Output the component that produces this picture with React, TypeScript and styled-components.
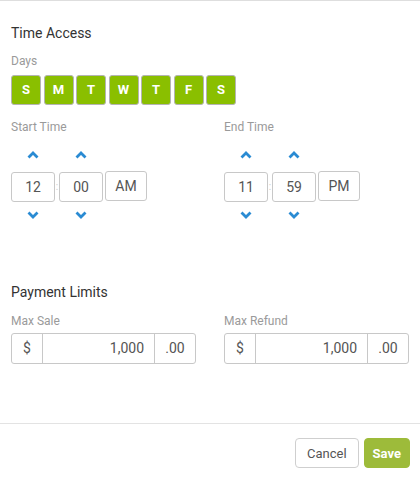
import React from 'react';
import styled, { createGlobalStyle } from 'styled-components';

const GlobalStyle = createGlobalStyle`
  html, body {
    margin: 0;
    padding: 0;
    background: #fff;
    font-family: Roboto, 'Liberation Sans', Arial, sans-serif;
  }
`;

const Panel = styled.div`
  width: 420px;
  height: 482px;
  box-sizing: border-box;
  border-top: 1px solid #dedede;
  display: flex;
  flex-direction: column;
`;

const Body = styled.div`
  flex: 1;
  padding: 0 11px;
`;

const SectionTitle = styled.div<{ $top: number }>`
  margin-top: ${(p) => p.$top}px;
  font-size: 14px;
  line-height: 20px;
  color: #333;
`;

const Label = styled.div<{ $top: number }>`
  margin-top: ${(p) => p.$top}px;
  font-size: 12px;
  line-height: 16px;
  color: #9a9a9a;
`;

const DayRow = styled.div`
  display: flex;
  gap: 2.5px;
  margin-top: 6px;
`;

const DayButton = styled.button`
  width: 30px;
  height: 30px;
  padding: 0;
  box-sizing: border-box;
  border: 1px solid #b4b4b4;
  border-radius: 3px;
  background: #8abf00;
  color: #fff;
  font-family: inherit;
  font-size: 13px;
  font-weight: 700;
  line-height: 28px;
  text-align: center;
`;

const Columns = styled.div`
  display: grid;
  grid-template-columns: 185px 185px;
  column-gap: 28px;
`;

const TimeRow = styled.div`
  display: flex;
  align-items: flex-start;
  margin-top: 10px;
`;

const Spinner = styled.div`
  display: flex;
  flex-direction: column;
  align-items: center;
  width: 44px;
`;

const Arrow = styled.button`
  width: 44px;
  height: 20px;
  padding: 0;
  border: 0;
  background: none;
  display: flex;
  align-items: center;
  justify-content: center;
`;

const TimeBox = styled.div`
  width: 44px;
  height: 30px;
  margin: 7px 0 3px;
  box-sizing: border-box;
  border: 1px solid #c8c8c8;
  border-radius: 3px;
  font-size: 14px;
  line-height: 28px;
  text-align: center;
  color: #555;
`;

const Colon = styled.span`
  width: 4px;
  margin-top: 27px;
  text-align: center;
  font-size: 10px;
  line-height: 30px;
  color: #ccc;
`;

const Meridian = styled.button`
  width: 42px;
  height: 30px;
  margin: 26px 0 0 2px;
  box-sizing: border-box;
  border: 1px solid #c8c8c8;
  border-radius: 3px;
  background: #fff;
  font-family: inherit;
  font-size: 14px;
  color: #555;
  padding: 0;
`;

const InputGroup = styled.div`
  display: flex;
  height: 31px;
  margin-top: 4px;
  box-sizing: border-box;
  border: 1px solid #c8c8c8;
  border-radius: 3px;
  font-size: 14px;
  line-height: 29px;
  color: #555;
`;

const Addon = styled.span<{ $w: number; $side: 'left' | 'right' }>`
  width: ${(p) => p.$w}px;
  text-align: center;
  ${(p) => (p.$side === 'left' ? 'border-right' : 'border-left')}: 1px solid #c8c8c8;
`;

const Amount = styled.span`
  flex: 1;
  text-align: right;
  padding-right: 10px;
`;

const Footer = styled.div`
  border-top: 1px solid #e3e3e3;
  padding: 14px 10px 14px 0;
  display: flex;
  justify-content: flex-end;
  gap: 5px;
`;

const Button = styled.button<{ $primary?: boolean }>`
  height: 30px;
  padding: 0 ${(p) => (p.$primary ? 8 : 11)}px;
  box-sizing: border-box;
  border-radius: 4px;
  border: 1px solid ${(p) => (p.$primary ? '#9dbb3a' : '#cfcfcf')};
  background: ${(p) => (p.$primary ? '#9dbb3a' : '#fff')};
  color: ${(p) => (p.$primary ? '#fff' : '#555')};
  font-family: inherit;
  font-size: 13px;
  font-weight: ${(p) => (p.$primary ? 700 : 400)};
`;

const Chevron = ({ up }: { up?: boolean }) => (
  <svg width="12" height="8" viewBox="0 0 12 8">
    <polyline
      points={up ? '1.5,6.5 6,2 10.5,6.5' : '1.5,1.5 6,6 10.5,1.5'}
      fill="none"
      stroke="#2a8bd3"
      strokeWidth="2.8"
    />
  </svg>
);

const days = ['S', 'M', 'T', 'W', 'T', 'F', 'S'];

function Spin({ value }: { value: string }) {
  return (
    <Spinner>
      <Arrow><Chevron up /></Arrow>
      <TimeBox>{value}</TimeBox>
      <Arrow><Chevron /></Arrow>
    </Spinner>
  );
}

function TimePicker({ hour, minute, ampm }: { hour: string; minute: string; ampm: string }) {
  return (
    <TimeRow>
      <Spin value={hour} />
      <Colon>:</Colon>
      <Spin value={minute} />
      <Meridian>{ampm}</Meridian>
    </TimeRow>
  );
}

function MoneyField({ label }: { label: string }) {
  return (
    <div>
      <Label $top={11}>{label}</Label>
      <InputGroup>
        <Addon $w={30} $side="left">$</Addon>
        <Amount>1,000</Amount>
        <Addon $w={40} $side="right">.00</Addon>
      </InputGroup>
    </div>
  );
}

export default function App() {
  return (
    <>
      <GlobalStyle />
      <Panel>
        <Body>
          <SectionTitle $top={22}>Time Access</SectionTitle>
          <Label $top={10}>Days</Label>
          <DayRow>
            {days.map((d, i) => (
              <DayButton key={i}>{d}</DayButton>
            ))}
          </DayRow>
          <Columns>
            <div>
              <Label $top={14}>Start Time</Label>
              <TimePicker hour="12" minute="00" ampm="AM" />
            </div>
            <div>
              <Label $top={14}>End Time</Label>
              <TimePicker hour="11" minute="59" ampm="PM" />
            </div>
          </Columns>
          <SectionTitle $top={57}>Payment Limits</SectionTitle>
          <Columns>
            <MoneyField label="Max Sale" />
            <MoneyField label="Max Refund" />
          </Columns>
        </Body>
        <Footer>
          <Button>Cancel</Button>
          <Button $primary>Save</Button>
        </Footer>
      </Panel>
    </>
  );
}
